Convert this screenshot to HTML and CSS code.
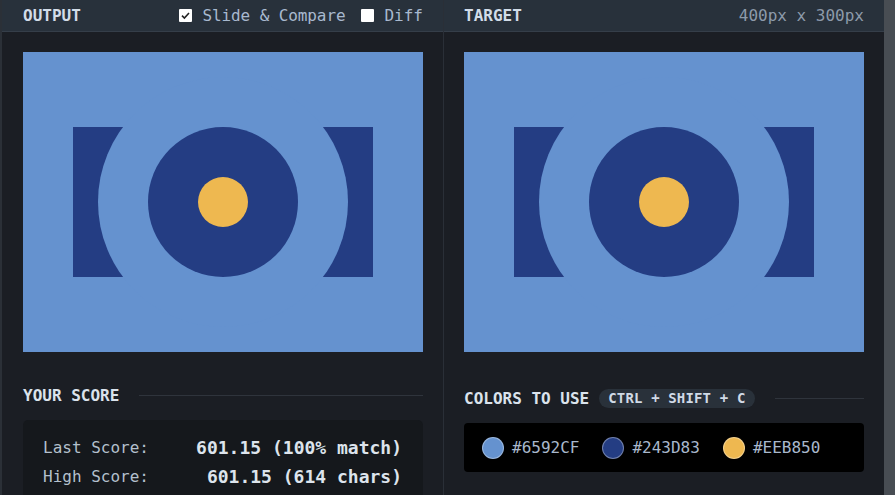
FILE: index.html
```html
<!DOCTYPE html>
<html>
<head>
<meta charset="utf-8">
<link rel="stylesheet" href="styles.css">
</head>
<body>
<div class="app">
  <div class="strip"></div>
  <section class="panel panel-left">
    <header class="bar">
      <span class="title">OUTPUT</span>
      <div class="opts">
        <label class="opt"><span class="box"><svg width="13" height="13" viewBox="0 0 13 13"><path d="M3 6.6 L5.4 9 L10 4" fill="none" stroke="#222" stroke-width="1.6"/></svg></span>Slide &amp; Compare</label>
        <label class="opt"><span class="box"></span>Diff</label>
      </div>
    </header>
    <div class="content">
      <svg class="art" width="400" height="300" viewBox="0 0 400 300">
        <rect width="400" height="300" fill="#6592CF"/>
        <rect x="50" y="75" width="300" height="150" fill="#243D83"/>
        <circle cx="200" cy="150" r="125" fill="#6592CF"/>
        <circle cx="200" cy="150" r="75" fill="#243D83"/>
        <circle cx="200" cy="150" r="25" fill="#EEB850"/>
      </svg>
      <div class="heading heading-score"><span class="htext">YOUR SCORE</span><span class="rule"></span></div>
      <div class="scorebox">
        <span class="lbl">Last Score:</span><span class="val">601.15 (100% match)</span>
        <span class="lbl">High Score:</span><span class="val">601.15 (614 chars)</span>
      </div>
    </div>
  </section>
  <section class="panel panel-right">
    <header class="bar">
      <span class="title">TARGET</span>
      <span class="dims">400px x 300px</span>
    </header>
    <div class="content">
      <svg class="art" width="400" height="300" viewBox="0 0 400 300">
        <rect width="400" height="300" fill="#6592CF"/>
        <rect x="50" y="75" width="300" height="150" fill="#243D83"/>
        <circle cx="200" cy="150" r="125" fill="#6592CF"/>
        <circle cx="200" cy="150" r="75" fill="#243D83"/>
        <circle cx="200" cy="150" r="25" fill="#EEB850"/>
      </svg>
      <div class="heading heading-colors"><span class="htext">COLORS TO USE</span><span class="pill">CTRL + SHIFT + C</span><span class="rule"></span></div>
      <div class="colorbox">
        <div class="swatch"><span class="dot dot-a"></span><span class="hex">#6592CF</span></div>
        <div class="swatch"><span class="dot dot-b"></span><span class="hex">#243D83</span></div>
        <div class="swatch"><span class="dot dot-c"></span><span class="hex">#EEB850</span></div>
      </div>
    </div>
  </section>
  <div class="scroll"></div>
</div>
</body>
</html>
```
FILE: styles.css
```css
html, body {
  margin: 0;
  padding: 0;
  width: 895px;
  height: 495px;
  overflow: hidden;
  background: #1b1e24;
  font-family: "DejaVu Sans Mono", "Liberation Mono", monospace;
  font-size: 16px;
}
.app {
  display: flex;
  height: 495px;
}
.strip {
  width: 2px;
  background: #2b3037;
  flex: none;
}
.panel {
  width: 441px;
  flex: none;
  display: flex;
  flex-direction: column;
}
.panel-left {
  border-right: 1px solid #2a2f37;
}
.panel-right {
  width: 440px;
}
.bar {
  height: 31px;
  border-bottom: 1px solid #353e49;
  background: #28313b;
  display: flex;
  align-items: center;
  justify-content: space-between;
  line-height: 31px;
}
.panel-left .bar { padding: 0 20px 0 21px; }
.panel-right .bar { padding: 0 20px 0 20px; }
.title {
  font-weight: bold;
  color: #d2dce8;
}
.opts {
  display: flex;
  gap: 16px;
}
.opt {
  display: flex;
  align-items: center;
  gap: 10px;
  color: #a8b9cf;
}
.opt:first-child {
  letter-spacing: -0.1px;
}
.box {
  width: 13px;
  height: 13px;
  background: #fff;
  border-radius: 1px;
  display: block;
}
.box svg { display: block; }
.dims {
  color: #8d9aaa;
}
.content {
  padding-top: 20px;
}
.panel-left .content { padding-left: 21px; }
.panel-right .content { padding-left: 20px; }
.art {
  display: block;
}
.heading {
  display: flex;
  align-items: center;
  width: 400px;
}
.heading-score {
  margin-top: 33px;
  height: 20px;
}
.heading-colors {
  margin-top: 37px;
  height: 19px;
}
.htext {
  font-weight: bold;
  color: #dbe3ec;
}
.rule {
  flex: 1;
  height: 1px;
  background: #2f343c;
  margin-left: 20px;
}
.pill {
  margin-left: 10px;
  background: #29313a;
  border-radius: 10px;
  height: 19px;
  line-height: 19px;
  padding: 0 9px 0 9px;
  font-size: 14px;
  letter-spacing: 0.15px;
  font-weight: bold;
  color: #d0dae6;
}
.scorebox {
  margin-top: 15px;
  width: 400px;
  box-sizing: border-box;
  background: #15181c;
  border-radius: 5px;
  padding: 13px 21px 10px 20px;
  display: grid;
  grid-template-columns: auto 1fr;
  line-height: 29px;
}
.lbl {
  color: #b4c0cd;
}
.val {
  text-align: right;
  font-weight: bold;
  font-size: 18px;
  color: #dde4ec;
}
.colorbox {
  margin-top: 15px;
  width: 400px;
  height: 49px;
  box-sizing: border-box;
  background: #000;
  border-radius: 4px;
  padding-left: 18px;
  display: flex;
  align-items: center;
  gap: 23px;
}
.swatch {
  display: flex;
  align-items: center;
  gap: 8px;
}
.dot {
  width: 22px;
  height: 22px;
  box-sizing: border-box;
  border-radius: 50%;
  border: 1px solid rgba(255,255,255,0.35);
  display: block;
}
.dot-a { background: #6592CF; }
.dot-b { background: #243D83; }
.dot-c { background: #EEB850; }
.hex {
  color: #a9b8cc;
}
.scroll {
  width: 11px;
  flex: none;
  background: #484d53;
}
```
